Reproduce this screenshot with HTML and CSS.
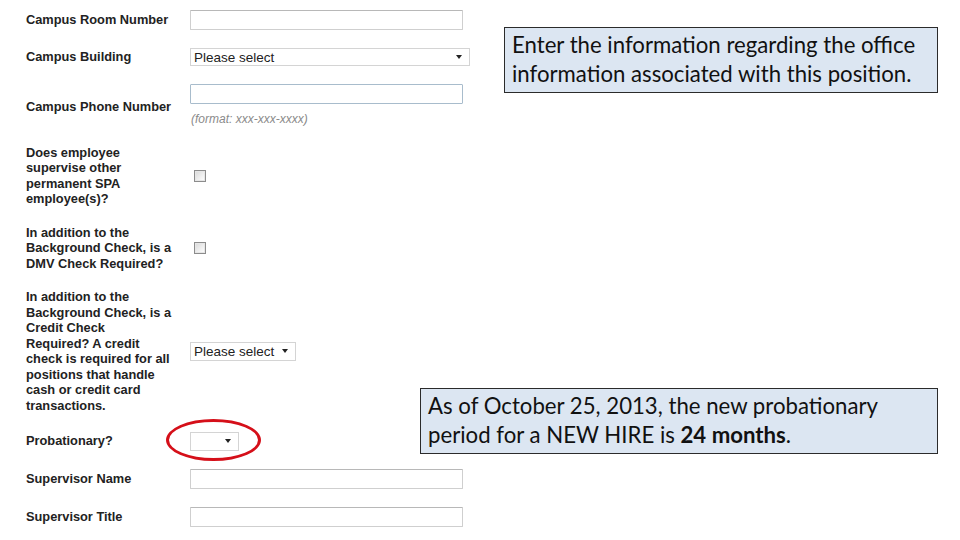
FILE: index.html
```html
<!DOCTYPE html>
<html>
<head>
<meta charset="utf-8">
<link rel="stylesheet" href="styles.css">
</head>
<body>
<div class="page">
  <form class="form">
    <div class="row">
      <div class="label">Campus Room Number</div>
      <div class="field"><div class="input"></div></div>
    </div>
    <div class="row">
      <div class="label">Campus Building</div>
      <div class="field"><div class="select select-wide"><span class="sel-text">Please select</span><span class="caret"></span></div></div>
    </div>
    <div class="row row-phone">
      <div class="label">Campus Phone Number</div>
      <div class="field">
        <div class="input input-focus"></div>
        <div class="hint">(format: xxx-xxx-xxxx)</div>
      </div>
    </div>
    <div class="row">
      <div class="label">Does employee<br>supervise other<br>permanent SPA<br>employee(s)?</div>
      <div class="field"><div class="checkbox"></div></div>
    </div>
    <div class="row">
      <div class="label">In addition to the<br>Background Check, is a<br>DMV Check Required?</div>
      <div class="field"><div class="checkbox"></div></div>
    </div>
    <div class="row">
      <div class="label">In addition to the<br>Background Check, is a<br>Credit Check<br>Required? A credit<br>check is required for all<br>positions that handle<br>cash or credit card<br>transactions.</div>
      <div class="field"><div class="select select-mid"><span class="sel-text">Please select</span><span class="caret"></span></div></div>
    </div>
    <div class="row">
      <div class="label">Probationary?</div>
      <div class="field">
        <div class="select select-small"><span class="sel-text"></span><span class="caret"></span><span class="ring"></span></div>
      </div>
    </div>
    <div class="row">
      <div class="label">Supervisor Name</div>
      <div class="field"><div class="input"></div></div>
    </div>
    <div class="row">
      <div class="label">Supervisor Title</div>
      <div class="field"><div class="input"></div></div>
    </div>
  </form>

  <div class="callout callout-office">Enter the information regarding the office<br>information associated with this position.</div>
  <div class="callout callout-prob">As of October 25, 2013, the new probationary<br>period for a NEW HIRE is <b>24 months</b>.</div>
</div>
</body>
</html>
```

FILE: styles.css
```css
html, body {
  margin: 0;
  padding: 0;
  background: #ffffff;
}
.page {
  position: relative;
  width: 960px;
  height: 540px;
  overflow: hidden;
  font-family: "Liberation Sans", Arial, sans-serif;
}
.form {
  display: flex;
  flex-direction: column;
  row-gap: 18.2px;
  padding: 10px 0 0 26px;
}
.row {
  display: flex;
  align-items: center;
}
.row-phone {
  margin-bottom: -3px;
}
.label {
  width: 150px;
  margin-right: 14px;
  font-size: 12.8px;
  font-weight: bold;
  line-height: 15.5px;
  color: #222222;
  white-space: nowrap;
}
.field {
  display: flex;
  flex-direction: column;
}
.input {
  box-sizing: border-box;
  width: 273px;
  height: 20px;
  border: 1px solid #cfcfcf;
  border-top-color: #b8b8b8;
  border-radius: 1px;
  background: #ffffff;
}
.input-focus {
  border-color: #a8bccc;
}
.hint {
  margin-top: 6px;
  padding-left: 1px;
  font-size: 12px;
  font-style: italic;
  line-height: 19px;
  color: #8a8a8a;
}
.select {
  position: relative;
  box-sizing: border-box;
  height: 19px;
  display: flex;
  align-items: center;
  justify-content: space-between;
  padding: 0 7px 0 3px;
  border: 1px solid #d4d4d4;
  background: #ffffff;
  font-size: 13.5px;
  color: #222222;
}
.select-wide { width: 280px; height: 18px; }
.select-mid { width: 106px; }
.select-small { width: 49px; }
.caret {
  width: 0;
  height: 0;
  border-left: 3.5px solid transparent;
  border-right: 3.5px solid transparent;
  border-top: 4px solid #222222;
}
.checkbox {
  box-sizing: border-box;
  width: 12px;
  height: 12px;
  margin-left: 4px;
  border: 1px solid #8c8c8c;
  background: linear-gradient(135deg, #d8d8d8 0%, #f4f4f4 70%, #ffffff 100%);
  box-shadow: inset 0 0 0 1px #e6e6e6;
}
.ring {
  position: absolute;
  left: -25px;
  top: -14px;
  width: 95px;
  height: 42px;
  box-sizing: border-box;
  border: 3px solid #d50f19;
  border-radius: 50%;
}
.callout {
  position: absolute;
  box-sizing: border-box;
  background: #dce6f2;
  border: 1px solid #2b2b2b;
  font-family: Lato, "Open Sans", sans-serif;
  font-size: 22.2px;
  line-height: 29px;
  color: #111111;
  padding: 2px 4px 0 7px;
  white-space: nowrap;
}
.callout b { font-weight: bold; }
.callout-office {
  left: 504px;
  top: 27px;
  width: 434px;
  height: 66px;
}
.callout-prob {
  left: 420px;
  top: 388px;
  width: 518px;
  height: 66px;
}
```
